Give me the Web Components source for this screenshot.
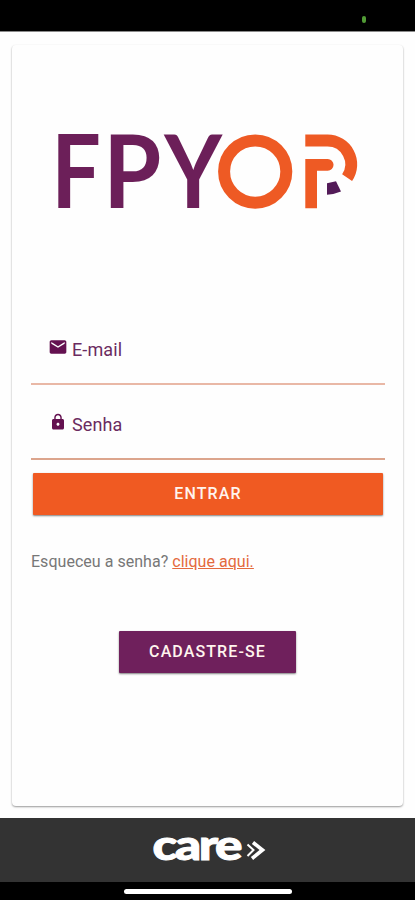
<!DOCTYPE html>
<html lang="pt-BR">
<head>
<meta charset="UTF-8">
<meta name="viewport" content="width=device-width, initial-scale=1.0">
<title>FPYOR</title>
<style>
  html, body {
    margin: 0;
    height: 100%;
    overflow: hidden;
    font-family: Roboto, "Liberation Sans", sans-serif;
  }
</style>
</head>
<body>
<login-page></login-page>
<script>
class StatusBar extends HTMLElement {
  connectedCallback() {
    this.attachShadow({ mode: 'open' });
    this.shadowRoot.innerHTML = `
      <style>
        :host {
          display: flex;
          justify-content: flex-end;
          align-items: flex-end;
          box-sizing: border-box;
          height: 32px;
          padding: 0 49px 8px 0;
          background: #000;
          border-bottom: 1px solid #8a8a8a;
        }
        .dot {
          width: 4px;
          height: 7px;
          border-radius: 2px;
          background: #519b35;
        }
      </style>
      <span class="dot"></span>
    `;
  }
}
customElements.define('status-bar', StatusBar);

class BrandLogo extends HTMLElement {
  connectedCallback() {
    this.attachShadow({ mode: 'open' });
    this.shadowRoot.innerHTML = `
      <style>
        :host {
          display: block;
          height: 80px;
        }
        svg {
          display: block;
          margin: 0 auto;
          overflow: visible;
        }
        text {
          font: 700 102px Lato, sans-serif;
          fill: #6c1f59;
        }
      </style>
      <svg width="304" height="80" viewBox="56 132 304 80">
        <text transform="translate(51.2 208.3) scale(0.86 1)">F</text>
        <text transform="translate(103.2 208.3) scale(0.92 1)">P</text>
        <text transform="translate(164.2 208.3) scale(0.875 1)">Y</text>
        <circle cx="255.2" cy="171.6" r="31.1" fill="none" stroke="#ee5a24" stroke-width="12"/>
        <path d="M305.3 140.6H327.5A23.7 23.7 0 0 1 347.1 177.6" fill="none" stroke="#ee5a24" stroke-width="12"/>
        <path d="M305.3 159H327.7A5.8 5.8 0 0 1 327.7 170.7H317V208.3H305.3Z" fill="#ee5a24"/>
        <path d="M327 183.2L336 181.2L341 191.6Q334 194.5 327 194.8Z" fill="#531b58"/>
      </svg>
    `;
  }
}
customElements.define('brand-logo', BrandLogo);

const ICONS = {
  mail: 'M20 4H4C2.9 4 2 4.9 2 6V18C2 19.1 2.9 20 4 20H20C21.1 20 22 19.1 22 18V6C22 4.9 21.1 4 20 4ZM20 8L12 13L4 8V6L12 11L20 6Z',
  lock: 'M18 8h-1V6c0-2.76-2.24-5-5-5S7 3.24 7 6v2H6c-1.1 0-2 .9-2 2v10c0 1.1.9 2 2 2h12c1.1 0 2-.9 2-2V10c0-1.1-.9-2-2-2zm-6 9c-1.1 0-2-.9-2-2s.9-2 2-2 2 .9 2 2-.9 2-2 2zm3.1-9H8.9V6c0-1.71 1.39-3.1 3.1-3.1s3.1 1.39 3.1 3.1v2z'
};

class FormField extends HTMLElement {
  connectedCallback() {
    const icon = this.getAttribute('icon');
    this.attachShadow({ mode: 'open' });
    this.shadowRoot.innerHTML = `
      <style>
        :host {
          display: flex;
          align-items: flex-start;
          box-sizing: border-box;
          height: 75px;
          padding: 27px 0 0 17px;
          border-bottom: 2px solid var(--line, #dfa58e);
          color: #6b2b60;
          font-size: 18px;
          line-height: 22px;
          letter-spacing: 0.1px;
        }
        svg {
          flex: none;
          width: 20px;
          height: 20px;
          margin-right: 4px;
          fill: #641150;
        }
        svg.lock {
          width: 18px;
          height: 18px;
          margin: 1px 5px 0 1px;
        }
        .label {
          padding-top: 2px;
        }
      </style>
      <svg class="${icon}" viewBox="0 0 24 24"><path d="${ICONS[icon]}"/></svg>
      <span class="label"><slot></slot></span>
    `;
  }
}
customElements.define('form-field', FormField);

class AppButton extends HTMLElement {
  connectedCallback() {
    this.attachShadow({ mode: 'open' });
    this.shadowRoot.innerHTML = `
      <style>
        :host {
          display: block;
        }
        button {
          display: block;
          width: 100%;
          height: 42px;
          padding: 0;
          border: none;
          border-radius: 1px;
          background: var(--button-color, #f05a22);
          box-shadow: 0 1px 2px rgba(0, 0, 0, 0.5);
          color: #fff4ee;
          font: 500 16px/42px Roboto, sans-serif;
          letter-spacing: 1.1px;
          text-transform: uppercase;
        }
      </style>
      <button><slot></slot></button>
    `;
  }
}
customElements.define('app-button', AppButton);

class LoginCard extends HTMLElement {
  connectedCallback() {
    this.attachShadow({ mode: 'open' });
    this.shadowRoot.innerHTML = `
      <style>
        :host {
          display: flex;
          flex-direction: column;
          flex: 1;
          box-sizing: border-box;
          margin: 13px 12px 12px;
          padding: 87px 18px 0 19px;
          border-radius: 4px;
          background: #fefefe;
          box-shadow: 0 1px 2px rgba(0, 0, 0, 0.4);
        }
        .fields {
          margin-top: 98px;
        }
        .submit {
          margin: 13px 2px 0;
        }
        p {
          margin: 36px 0 0;
          color: #777;
          font-size: 16px;
          line-height: 22px;
          letter-spacing: 0.03px;
        }
        a {
          color: #e46a3e;
          text-underline-offset: 1px;
        }
        .register {
          --button-color: #6f205c;
          width: 177px;
          margin: 58px 0 0 88px;
        }
      </style>
      <brand-logo></brand-logo>
      <div class="fields">
        <form-field icon="mail" style="--line: #e9b8a6">E-mail</form-field>
        <form-field icon="lock" style="--line: #dca58d">Senha</form-field>
      </div>
      <app-button class="submit">Entrar</app-button>
      <p>Esqueceu a senha? <a href="#">clique aqui.</a></p>
      <app-button class="register">Cadastre-se</app-button>
    `;
  }
}
customElements.define('login-card', LoginCard);

class CareFooter extends HTMLElement {
  connectedCallback() {
    this.attachShadow({ mode: 'open' });
    this.shadowRoot.innerHTML = `
      <style>
        :host {
          display: block;
          background: #333;
        }
        .brand {
          display: flex;
          justify-content: center;
          height: 64px;
        }
        .brand svg {
          overflow: visible;
        }
        text {
          font: 900 42px Lato, sans-serif;
          letter-spacing: -2px;
          fill: #fff;
          stroke: #fff;
          stroke-width: 1px;
        }
        .home {
          display: flex;
          justify-content: center;
          height: 18px;
          background: #000;
        }
        .home span {
          width: 168px;
          height: 5px;
          margin-top: 7px;
          border-radius: 3px;
          background: #fff;
        }
      </style>
      <div class="brand">
        <svg width="115" height="64" viewBox="150 818 115 64">
          <text transform="translate(152.6 860.3) scale(1.22 1)">care</text>
          <path d="M247.5 844.5L253.5 850L247.500 856" fill="none" stroke="#fff" stroke-width="2"/>
          <path d="M253 842.5L262.5 850L252 858.5" fill="none" stroke="#fff" stroke-width="3.6"/>
        </svg>
      </div>
      <div class="home"><span></span></div>
    `;
  }
}
customElements.define('care-footer', CareFooter);

class LoginPage extends HTMLElement {
  connectedCallback() {
    this.attachShadow({ mode: 'open' });
    this.shadowRoot.innerHTML = `
      <style>
        :host {
          display: flex;
          flex-direction: column;
          height: 900px;
          background: #fefefe;
        }
      </style>
      <status-bar></status-bar>
      <login-card></login-card>
      <care-footer></care-footer>
    `;
  }
}
customElements.define('login-page', LoginPage);
</script>
</body>
</html>
